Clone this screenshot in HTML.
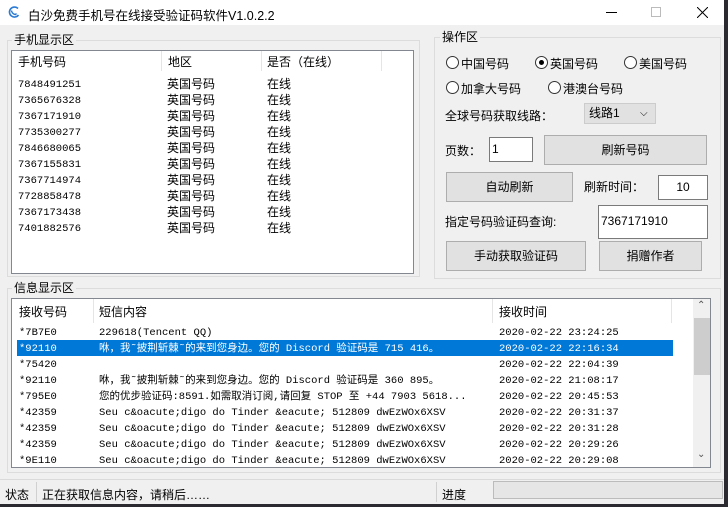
<!DOCTYPE html><html><head><meta charset="utf-8"><style>
*{margin:0;padding:0;box-sizing:border-box}
body{width:728px;height:507px;background:#2b2a30;position:relative;overflow:hidden;font-family:"Liberation Sans","Noto Sans CJK SC",sans-serif;font-size:12px;color:#000}
.a{position:absolute}
.win{left:0;top:0;width:724px;height:504px;background:#f0f0f0}
.title{left:0;top:0;width:724px;height:25px;background:#fff;font-size:12px}
.grp{border:1px solid #dcdcdc}
.lbl{background:#f0f0f0;padding:0 2px;line-height:14px}
.lv{background:#fff;border:1px solid #828790}
.hd{color:#000;line-height:20px}
.mono{font-family:"Liberation Mono","Noto Sans CJK SC",monospace;font-size:10.5px;white-space:nowrap}
.btn{background:#e1e1e1;border:1px solid #adadad;text-align:center}
.inp{background:#fff;border:1px solid #7a7a7a}
.rad{width:13px;height:13px;border:1px solid #333;border-radius:50%;background:#fff}
.sep{width:1px;background:#e5e5e5}
</style></head><body>
<div class="a win"></div>
<div class="a title">
 <svg class="a" style="left:7px;top:5px" width="14" height="14" viewBox="0 0 14 14"><path d="M11 3.5A5 5 0 1 0 11.5 10" fill="none" stroke="#2a7bd5" stroke-width="1.6"/><path d="M4.5 5.5c0 2 2 4 4 4l1-1" fill="none" stroke="#2a7bd5" stroke-width="1.4"/></svg>
 <div class="a" style="left:28px;top:5px;font-size:12.5px">白沙免费手机号在线接受验证码软件V1.0.2.2</div>
 <div class="a" style="left:606px;top:12px;width:11px;height:1px;background:#000"></div>
 <div class="a" style="left:651px;top:7px;width:10px;height:10px;border:1px solid #bbb"></div>
 <svg class="a" style="left:697px;top:7px" width="11" height="11"><path d="M0 0L11 11M11 0L0 11" stroke="#000" stroke-width="1"/></svg>
</div>
<div class="a grp" style="left:7px;top:40px;width:413px;height:237px"></div>
<div class="a lbl" style="left:12px;top:33px">手机显示区</div>
<div class="a lv" style="left:11px;top:50px;width:403px;height:224px"></div>
<div class="a sep" style="left:161px;top:51px;height:20px"></div>
<div class="a sep" style="left:261px;top:51px;height:20px"></div>
<div class="a sep" style="left:381px;top:51px;height:20px"></div>
<div class="a hd" style="left:18px;top:52px">手机号码</div>
<div class="a hd" style="left:168px;top:52px">地区</div>
<div class="a hd" style="left:267px;top:52px">是否（在线）</div>
<div class="a" style="left:18px;top:77px;line-height:16px">
<div class="mono">7848491251<br>7365676328<br>7367171910<br>7735300277<br>7846680065<br>7367155831<br>7367714974<br>7728858478<br>7367173438<br>7401882576</div></div>
<div class="a" style="left:167px;top:76px;line-height:16px">英国号码<br>英国号码<br>英国号码<br>英国号码<br>英国号码<br>英国号码<br>英国号码<br>英国号码<br>英国号码<br>英国号码</div>
<div class="a" style="left:267px;top:76px;line-height:16px">在线<br>在线<br>在线<br>在线<br>在线<br>在线<br>在线<br>在线<br>在线<br>在线</div>
<div class="a grp" style="left:434px;top:37px;width:287px;height:242px"></div>
<div class="a lbl" style="left:440px;top:30px">操作区</div>
<div class="a rad" style="left:446px;top:56px"></div><div class="a" style="left:461px;top:55px">中国号码</div>
<div class="a rad" style="left:535px;top:56px"></div><div class="a" style="left:539px;top:60px;width:5px;height:5px;border-radius:50%;background:#000"></div><div class="a" style="left:550px;top:55px">英国号码</div>
<div class="a rad" style="left:624px;top:56px"></div><div class="a" style="left:639px;top:55px">美国号码</div>
<div class="a rad" style="left:446px;top:81px"></div><div class="a" style="left:461px;top:80px">加拿大号码</div>
<div class="a rad" style="left:548px;top:81px"></div><div class="a" style="left:563px;top:80px">港澳台号码</div>
<div class="a" style="left:445px;top:107px">全球号码获取线路：</div>
<div class="a btn" style="left:584px;top:103px;width:72px;height:21px;text-align:left;padding-left:4px;line-height:19px;border-color:#ccc">线路1<span class="a" style="left:55px;top:0;font-size:10px">⌵</span></div>
<div class="a" style="left:445px;top:142px">页数：</div>
<div class="a inp" style="left:489px;top:137px;width:44px;height:25px;padding:4px 2px">1</div>
<div class="a btn" style="left:544px;top:135px;width:163px;height:30px;line-height:28px">刷新号码</div>
<div class="a btn" style="left:446px;top:172px;width:127px;height:30px;line-height:28px">自动刷新</div>
<div class="a" style="left:584px;top:178px">刷新时间：</div>
<div class="a inp" style="left:658px;top:175px;width:50px;height:25px;line-height:23px;text-align:center">10</div>
<div class="a" style="left:445px;top:213px">指定号码验证码查询:</div>
<div class="a inp" style="left:598px;top:205px;width:110px;height:34px;line-height:30px;padding-left:2px">7367171910</div>
<div class="a btn" style="left:446px;top:241px;width:140px;height:30px;line-height:28px">手动获取验证码</div>
<div class="a btn" style="left:599px;top:241px;width:103px;height:30px;line-height:28px">捐赠作者</div>
<div class="a grp" style="left:7px;top:288px;width:714px;height:185px"></div>
<div class="a lbl" style="left:12px;top:281px">信息显示区</div>
<div class="a lv" style="left:11px;top:298px;width:700px;height:170px"></div>
<div class="a sep" style="left:93px;top:299px;height:24px"></div>
<div class="a sep" style="left:492px;top:299px;height:24px"></div>
<div class="a sep" style="left:671px;top:299px;height:24px"></div>
<div class="a hd" style="left:19px;top:302px">接收号码</div>
<div class="a hd" style="left:99px;top:302px">短信内容</div>
<div class="a hd" style="left:499px;top:302px">接收时间</div>
<div class="a" style="left:693px;top:299px;width:17px;height:168px;background:#f0f0f0"></div>
<div class="a" style="left:694px;top:318px;width:16px;height:57px;background:#cdcdcd"></div>
<div class="a" style="left:697px;top:300px;font-size:10px;color:#555">⌃</div>
<div class="a" style="left:697px;top:449px;font-size:10px;color:#555">⌄</div>
<div class="a" style="left:17px;top:340px;width:656px;height:16px;background:#0078d7"></div>
<div class="a mono" style="left:19px;top:325px;line-height:16px">*7B7E0<br><span style="color:#fff">*92110</span><br>*75420<br>*92110<br>*795E0<br>*42359<br>*42359<br>*42359<br>*9E110</div>
<div class="a mono" style="left:99px;top:325px;line-height:16px">229618(Tencent QQ)<br><span style="color:#fff">咻，我˜披荆斩棘˜的来到您身边。您的 Discord 验证码是 715 416。</span><br>&nbsp;<br>咻，我˜披荆斩棘˜的来到您身边。您的 Discord 验证码是 360 895。<br>您的优步验证码:8591.如需取消订阅,请回复 STOP 至 +44 7903 5618...<br>Seu c&amp;oacute;digo do Tinder &amp;eacute; 512809 dwEzWOx6XSV<br>Seu c&amp;oacute;digo do Tinder &amp;eacute; 512809 dwEzWOx6XSV<br>Seu c&amp;oacute;digo do Tinder &amp;eacute; 512809 dwEzWOx6XSV<br>Seu c&amp;oacute;digo do Tinder &amp;eacute; 512809 dwEzWOx6XSV</div>
<div class="a mono" style="left:499px;top:325px;line-height:16px">2020-02-22 23:24:25<br><span style="color:#fff">2020-02-22 22:16:34</span><br>2020-02-22 22:04:39<br>2020-02-22 21:08:17<br>2020-02-22 20:45:53<br>2020-02-22 20:31:37<br>2020-02-22 20:31:28<br>2020-02-22 20:29:26<br>2020-02-22 20:29:08</div>
<div class="a" style="left:0;top:479px;width:724px;height:1px;background:#dadada"></div>
<div class="a" style="left:5px;top:486px">状态</div>
<div class="a sep" style="left:36px;top:482px;height:20px;background:#d0d0d0"></div>
<div class="a" style="left:42px;top:486px">正在获取信息内容，请稍后……</div>
<div class="a sep" style="left:436px;top:482px;height:20px;background:#d0d0d0"></div>
<div class="a" style="left:442px;top:486px">进度</div>
<div class="a" style="left:493px;top:481px;width:230px;height:18px;background:#e6e6e6;border:1px solid #bcbcbc"></div>
</body></html>
